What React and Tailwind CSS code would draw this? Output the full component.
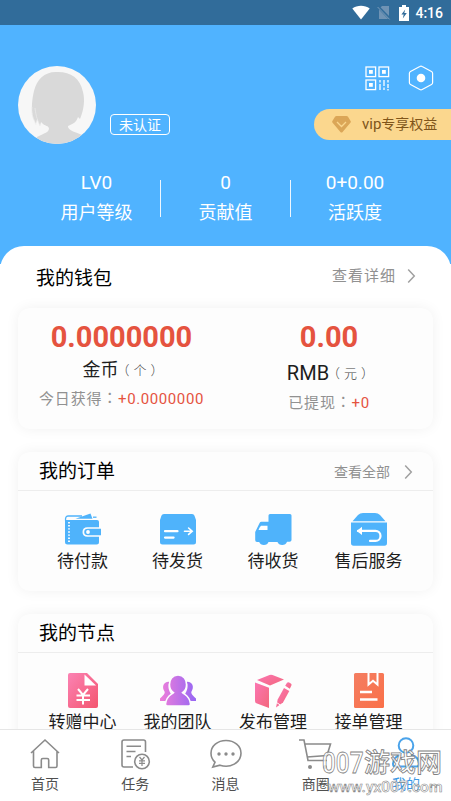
import React from "react";

function StatusBar() {
  return (
    <div className="flex h-[25px] items-center justify-end bg-[#316c9a] pr-[8px] text-white">
      <svg width="18" height="16" viewBox="0 0 18 16" fill="#fff">
        <path d="M0.3 3.6C5.2-.2 12.8-.2 17.7 3.6L9 14.6z" />
      </svg>
      <svg className="ml-[7px]" width="14" height="15" viewBox="0 0 14 15">
        <path d="M5 1h7v13H2V4z" fill="#6f93b4" />
        <path d="M0.6 1.2L13 14" stroke="#316c9a" strokeWidth="2.6" />
        <path d="M0.6 2L12.6 14.4" stroke="#7c9cba" strokeWidth="1" />
      </svg>
      <svg className="ml-[8px]" width="10" height="16" viewBox="0 0 10 16">
        <path d="M3 0h4v2h3v14H0V2h3z" fill="#fff" />
        <path d="M6.2 4.5L2.4 9.6h2.3l-.9 4 4-5.5H5.3z" fill="#316c9a" />
      </svg>
      <span className="ml-[6px] pt-px text-[14px] leading-[24px] font-medium">4:16</span>
    </div>
  );
}

function Avatar() {
  return (
    <svg width="78" height="78" viewBox="0 0 78 78">
      <defs>
        <clipPath id="avatar">
          <circle cx="39" cy="39" r="39" />
        </clipPath>
      </defs>
      <g clipPath="url(#avatar)">
        <rect width="78" height="78" fill="#f7f7f7" />
        <path
          d="M40 6C27 5 19 13 16 25C14 34 13 42 15 52L18 58L19 53L22 60L23 56C27 61 31 59 31 63C30 67 26 67 19 71V78H64V69C58 66 51 65 50 61C50 58 57 60 60 51L62 53C66 43 67 34 65 26C62 12 53 6 40 6Z"
          fill="#d9d9d9"
        />
        <path d="M14 41C13 49 16 53 18 59M17 42C18 51 20 55 22 60" stroke="#ececec" strokeWidth=".7" fill="none" />
      </g>
    </svg>
  );
}

function QrIcon() {
  return (
    <svg width="25" height="25" viewBox="0 0 25 25" fill="none" stroke="#fff" strokeWidth="1.3">
      <rect x="1" y="1" width="9.6" height="9.6" />
      <rect x="14" y="1" width="9.6" height="9.6" />
      <rect x="1" y="14" width="9.6" height="9.6" />
      <g fill="#fff" stroke="none">
        <rect x="4" y="4" width="3.8" height="3.8" />
        <rect x="17" y="4" width="3.8" height="3.8" />
        <rect x="4" y="17" width="3.8" height="3.8" />
      </g>
      <path d="M15 14v2.500m0 1.500v6M19 14v6m0 1.500v2.500M23 14v2.500m0 1.500v4m0 1v1.500" strokeWidth="1.3" />
    </svg>
  );
}

function HexIcon() {
  return (
    <svg width="26" height="26" viewBox="0 0 26 26">
      <path d="M11.800 1.500Q13 .8 14.200 1.500L23.500 6.500Q24.600 7.100 24.600 8.300V17.700Q24.600 18.900 23.500 19.500L14.200 24.500Q13 25.200 11.800 24.500L2.500 19.500Q1.400 18.900 1.400 17.700V8.300Q1.400 7.100 2.500 6.500Z" fill="none" stroke="#fff" strokeWidth="1.200" />
      <circle cx="13" cy="13" r="4.300" fill="#fff" />
    </svg>
  );
}

function Stat({ value, label, className }) {
  return (
    <div className={"flex flex-col items-center text-white " + className}>
      <span className="pt-px text-[19px] leading-[26px]">{value}</span>
      <span className="mt-[3px] text-[18px] leading-[28px]">{label}</span>
    </div>
  );
}

function Chevron() {
  return (
    <svg width="9" height="16" viewBox="0 0 9 16" fill="none" stroke="#a0a0a0" strokeWidth="1.500">
      <path d="M1.200 1.400L7.300 8L1.200 14.600" />
    </svg>
  );
}

function WalletIcon() {
  return (
    <svg width="38" height="34" viewBox="0 0 38 34">
      <path d="M1 7H33Q35 7 35 9V29q0 2.500-2.500 2.500H3.500Q1 31.500 1 29z" fill="#4fb3fb" />
      <path d="M1.600 8Q1 3 4 3H18" fill="none" stroke="#4fb3fb" strokeWidth="1.300" />
      <path d="M11.500 5.800L26.500 .5L28.500 5.800z" fill="#4fb3fb" />
      <path d="M29 4.200h3.500" stroke="#4fb3fb" strokeWidth="1.300" />
      <path d="M5 9v21" stroke="#fff" strokeWidth="1.800" strokeDasharray="1.400 1.700" />
      <path d="M38 14.200H23.500Q18.500 14.200 18.500 19T23.500 23.800H38z" fill="#fdfdfd" />
      <path d="M37 15.800H24Q20.200 15.800 20.200 19T24 22.200H37z" fill="#4fb3fb" />
      <circle cx="24" cy="19" r="1.900" fill="#fff" />
    </svg>
  );
}

function SendIcon() {
  return (
    <svg width="38" height="34" viewBox="0 0 38 34">
      <path d="M5 1h28q2 0 2.500 1.800L37 7v22q0 2.500-2.500 2.500h-31Q1 31.500 1 29V7l1.400-4.200Q3 1 5 1" fill="#4fb3fb" />
      <g fill="none" stroke="#fff" strokeWidth="2.200" strokeLinecap="round">
        <path d="M6 18.200h12.500M6 24.600h8.600" />
        <path d="M25.500 18.200h7.500M29.600 15l3.600 3.200-3.600 3.200" strokeWidth="1.600" />
      </g>
    </svg>
  );
}

function TruckIcon() {
  return (
    <svg width="38" height="34" viewBox="0 0 38 34">
      <path d="M16 1h20q1.500 0 1.500 1.500V27q0 1.800-2 1.800H33Q31.800 32 28.200 32T23.500 29H14.500Q13.500 32 9.900 32T5.200 29H3Q1.200 29 1.200 27V19L5.600 10Q6.200 8.800 7.500 8.800H14.500V2.500Q14.500 1 16 1" fill="#4fb3fb" />
      <path d="M7 12.800h6.500V17H4.500Q5.500 14 7 12.800" fill="#fff" />
    </svg>
  );
}

function ReturnIcon() {
  return (
    <svg width="38" height="34" viewBox="0 0 38 34">
      <path d="M13 0h12q3 0 5 2l5.500 6.200H2.500L8 2Q10 0 13 0" fill="#4fb3fb" />
      <path d="M1 9.600h36V30q0 2.800-2.500 2.800h-31Q1 32.800 1 30z" fill="#4fb3fb" />
      <path d="M8 17.900h17.500a5 5 0 0 1 0 10H20" fill="none" stroke="#fff" strokeWidth="2.200" strokeLinecap="round" />
      <path d="M12 13.800v8.200l-5.300-4.100z" fill="#fff" />
    </svg>
  );
}

function GiftDocIcon() {
  return (
    <svg width="32" height="37" viewBox="0 0 32 37">
      <defs>
        <linearGradient id="doc" x1="0" y1="0" x2="1" y2="1">
          <stop stopColor="#fb83b4" />
          <stop offset="1" stopColor="#f4556f" />
        </linearGradient>
      </defs>
      <path d="M3 1h17L31 12v22q0 2-2 2H3q-2 0-2-2V3q0-2 2-2" fill="url(#doc)" />
      <path d="M17.500 2.500V13.500H29z" fill="#fff" />
      <path d="M11 17l5 6 5-6M9.500 23.500h13.500M9.500 28h13.500M16 23v9.500" fill="none" stroke="#fff" strokeWidth="2" />
    </svg>
  );
}

function TeamIcon() {
  return (
    <svg width="38" height="34" viewBox="0 0 38 34">
      <defs>
        <linearGradient id="team" x1="0" y1="0" x2="38" y2="0" gradientUnits="userSpaceOnUse">
          <stop stopColor="#f17fd9" />
          <stop offset="1" stopColor="#9466f4" />
        </linearGradient>
      </defs>
      <g fill="url(#team)">
        <path d="M10.500 7.800C4.500 7.200 2.500 13 5.500 17.500C6.500 19.500 4 21.500 1 24.500V27H7L12 20C9.500 16 8.500 12 10.500 7.800" />
        <path d="M27.500 7.800C33.500 7.200 35.500 13 32.500 17.500C31.500 19.500 34 21.500 37 24.500V27H31L26 20C28.500 16 29.500 12 27.500 7.800" />
      </g>
      <path d="M19 1C13 1 10.500 6 10.500 10.500C10.500 14 12 17 14.500 18.600C12 21 7.500 21.500 6.500 30Q6.500 32 8.500 32H29.500Q31.500 32 31.500 30C30.500 21.500 26 21 23.500 18.600C26 17 27.500 14 27.500 10.500C27.500 6 25 1 19 1Z" fill="url(#team)" stroke="#fdfdfd" strokeWidth="1.500" />
    </svg>
  );
}

function PublishIcon() {
  return (
    <svg width="38" height="36" viewBox="0 0 38 36">
      <defs>
        <linearGradient id="pub" x1="0" y1="0" x2="1" y2="1">
          <stop stopColor="#fb76b2" />
          <stop offset="1" stopColor="#f3677c" />
        </linearGradient>
      </defs>
      <g fill="url(#pub)">
        <path d="M3 7L15.500 2Q17 1.500 18.500 2L30 6.500L16 12.500z" />
        <path d="M1 9.500L15 14.800V35L3 30.500Q1 30 1 28z" />
        <path d="M23.700 26.500L30 15L35.300 18L29 29.500L22 34.500z" />
        <path d="M31.200 12.800L33 9.800Q34 8.800 35.200 9.500L36.800 10.600Q38 11.300 37.400 12.600L35.800 15.800z" />
      </g>
      <path d="M22.500 29.500l4 2.600" stroke="#fff" strokeWidth="1" />
    </svg>
  );
}

function OrderDocIcon() {
  return (
    <svg width="32" height="37" viewBox="0 0 32 37">
      <defs>
        <linearGradient id="order" x1="0" y1="0" x2="1" y2="1">
          <stop stopColor="#f47e62" />
          <stop offset="1" stopColor="#fa7048" />
        </linearGradient>
      </defs>
      <rect x="1" y="1" width="30" height="35" rx="1.500" fill="url(#order)" />
      <path d="M15.500 1v11.500l4.500-3.800 4.500 3.800V1" fill="none" stroke="#fff" strokeWidth="2" />
      <path d="M7 20h12M7 27.500h17.500" stroke="#fff" strokeWidth="2.300" />
    </svg>
  );
}

function Card({ title, more, children, className }) {
  return (
    <section className={"mx-[18px] rounded-[12px] bg-[#fdfdfd] shadow-[0_0_14px_rgba(0,0,0,0.06)] " + className}>
      <div className="flex h-[39px] items-center justify-between border-b border-[#ededed] pr-5 pl-[21px]">
        <h2 className="pt-px text-[19px] leading-[28px] text-black">{title}</h2>
        {more && (
          <div className="flex items-center gap-[14px] pt-px text-[14px] leading-5 text-[#919191]">
            {more}
            <Chevron />
          </div>
        )}
      </div>
      <div className="grid grid-cols-[95px_95px_96px_95px] pl-[17px]">{children}</div>
    </section>
  );
}

function Entry({ icon, label }) {
  return (
    <div className="flex flex-col items-center">
      <div className="flex h-[37px] items-center">{icon}</div>
      <span className="mt-px text-[17px] leading-[24px] whitespace-nowrap text-[#1d1d1d]">{label}</span>
    </div>
  );
}

const stroke = { fill: "none", stroke: "#8b8b8b", strokeWidth: 1.6 };

function HomeIcon() {
  return (
    <svg width="32" height="32" viewBox="0 0 32 32" {...stroke}>
      <path d="M2 15L16 2L30 15M4.500 13V28Q4.500 29.500 6 29.500H12.300V22Q12.300 20.500 13.800 20.500H18.200Q19.700 20.500 19.700 22V29.500H26.500Q28 29.500 28 28V13" />
    </svg>
  );
}

function TaskIcon() {
  return (
    <svg width="32" height="32" viewBox="0 0 32 32" {...stroke}>
      <path d="M26.500 14V4Q26.500 2 24.500 2H5Q3 2 3 4V27Q3 29 5 29H14M7.500 8.300H22M7.500 13.500H16.500M7.500 18.500H12" />
      <circle cx="23" cy="23.500" r="7.300" />
      <path d="M20.500 19l2.500 3 2.500-3M20 22.800h6M20 25.300h6M23 22v6" strokeWidth="1.200" />
    </svg>
  );
}

function ChatIcon() {
  return (
    <svg width="34" height="32" viewBox="0 0 34 32" {...stroke}>
      <path d="M17 2.500C8.500 2.500 2 8 2 15.300C2 19 3.500 22 6 24.200L3.800 29L11 27.200C21 30.500 32 25 32 15.300C32 8 25.500 2.500 17 2.500Z" />
      <g fill="#8b8b8b" stroke="none">
        <circle cx="10" cy="16" r="1.700" />
        <circle cx="17" cy="16" r="1.700" />
        <circle cx="24" cy="16" r="1.700" />
      </g>
    </svg>
  );
}

function CartIcon() {
  return (
    <svg width="34" height="32" viewBox="0 0 34 32" {...stroke}>
      <path d="M0 2H5L9 22.500H28M6.500 6H31.500L28 17.500L8 19" />
      <g fill="#8b8b8b" stroke="none">
        <circle cx="11" cy="29" r="2" />
        <circle cx="26" cy="29" r="2" />
      </g>
    </svg>
  );
}

function MeIcon() {
  return (
    <svg width="32" height="34" viewBox="0 0 32 34" fill="none" stroke="#4aa3ea" strokeWidth="2">
      <circle cx="16" cy="8.500" r="7.300" />
      <path d="M11 17.500C5 19.500 3 23 3 27Q3 29.500 5.500 29.500H26.500Q29 29.500 29 27C29 23 27 19.500 21 17.500" />
    </svg>
  );
}

function Tab({ icon, label, active }) {
  return (
    <div className="flex flex-1 flex-col items-center">
      <div className="flex h-[32px] items-center">{icon}</div>
      <span className={"mt-[4px] text-[14px] leading-5 " + (active ? "text-[#3c98e4]" : "text-[#4f4f4f]")}>{label}</span>
    </div>
  );
}

function Unit({ children }) {
  return <span className="-mr-[7px] -ml-[2px] pt-px text-[13px] font-light tracking-[4px] text-[#444]">{children}</span>;
}

function Colon() {
  return <span className="pb-[5px] leading-none font-['Noto_Sans_CJK_TC',sans-serif]">：</span>;
}

export default function App() {
  return (
    <div className="relative flex h-[801px] w-[451px] flex-col overflow-hidden bg-white font-['Roboto','Noto_Sans_CJK_SC',sans-serif]">
      <StatusBar />
      <header className="h-[239px] shrink-0 bg-[#50b3ff]">
        <div className="flex h-[119px]">
          <div className="pt-[41px] pl-[18px]">
            <Avatar />
          </div>
          <div className="mt-[89px] ml-[14px] flex h-[21px] w-[60px] items-center justify-center rounded-[4px] border border-white pt-px text-[14px] leading-[18px] text-white">
            未认证
          </div>
          <div className="ml-auto flex flex-col items-end pt-[40px]">
            <div className="flex items-center gap-[18px] pr-[17px]">
              <QrIcon />
              <HexIcon />
            </div>
            <div className="mt-[18px] flex h-[31px] w-[137px] items-center rounded-l-full bg-[#fbd78e] pl-[18px] text-[14px] text-[#80551a]">
              <svg width="19" height="17" viewBox="0 0 19 17">
                <path d="M4.500 0h10q1 0 1.500.8l2.600 4.200q.6 1-.2 1.800L10.600 16q-1.100 1-2.200 0L.6 6.800Q-.2 6 .4 5L3 .8Q3.500 0 4.500 0" fill="#dba657" />
                <path d="M5 6l4.500 4.500L14 6" fill="none" stroke="#fbd78e" strokeWidth="1.300" />
              </svg>
              <span className="ml-[11px] whitespace-nowrap"><span className="text-[15px]">vip</span>专享权益</span>
            </div>
          </div>
        </div>
        <div className="mt-[25px] flex h-[57px]">
          <Stat value="LV0" label="用户等级" className="ml-8 w-[129px]" />
          <div className="-ml-px mt-[11px] h-[37px] w-px bg-white/90" />
          <Stat value="0" label="贡献值" className="w-[129px]" />
          <div className="mt-[11px] h-[37px] w-px bg-white/90" />
          <Stat value="0+0.00" label="活跃度" className="w-[128px]" />
        </div>
      </header>
      <main className="relative -mt-[18px] min-h-0 flex-1 overflow-hidden rounded-t-[24px] bg-white">
        <div className="flex h-[62px] items-center justify-between pr-[35px] pl-9">
          <h2 className="pt-[3px] text-[19px] leading-[28px] text-black">我的钱包</h2>
          <div className="flex items-center gap-[11px] pb-[2px] text-[15px] leading-5 tracking-[1px] text-[#919191]">
            查看详细
            <Chevron />
          </div>
        </div>
        <section className="mx-[18px] flex h-[121px] rounded-[12px] bg-[#fdfdfd] shadow-[0_0_14px_rgba(0,0,0,0.06)]">
          <div className="flex w-[207px] flex-col items-center">
            <span className="mt-[12px] text-[29px] leading-[34px] font-bold text-[#e5533f]">0.0000000</span>
            <span className="mt-[3px] flex h-[26px] text-[18px] leading-[26px] whitespace-nowrap text-[#1d1d1d]">
              金币<Unit>（个）</Unit>
            </span>
            <span className="mt-[5px] flex h-[22px] items-center text-[15px] leading-[22px] tracking-[0.8px] whitespace-nowrap text-[#919191]">
              今日获得<Colon /><span className="tracking-[0.6px] text-[#e5533f]">+0.0000000</span>
            </span>
          </div>
          <div className="flex w-[208px] flex-col items-center">
            <span className="mt-[12px] text-[29px] leading-[34px] font-bold text-[#e5533f]">0.00</span>
            <span className="mt-[5px] flex h-[26px] text-[20px] leading-[28px] whitespace-nowrap text-[#1d1d1d]">
              RMB<Unit>（元）</Unit>
            </span>
            <span className="mt-[7px] flex h-[22px] items-center text-[15px] leading-[22px] tracking-[0.8px] text-[#919191]">
              已提现<Colon /><span className="tracking-[0.6px] text-[#e5533f]">+0</span>
            </span>
          </div>
        </section>
        <Card title="我的订单" more="查看全部" className="mt-[23px] h-[139px]">
          <div className="col-span-4 h-[20px]" />
          <Entry icon={<WalletIcon />} label="待付款" />
          <Entry icon={<SendIcon />} label="待发货" />
          <Entry icon={<TruckIcon />} label="待收货" />
          <Entry icon={<ReturnIcon />} label="售后服务" />
        </Card>
        <Card title="我的节点" className="mt-[23px] h-[150px]">
          <div className="col-span-4 h-[19px]" />
          <Entry icon={<GiftDocIcon />} label="转赠中心" />
          <Entry icon={<TeamIcon />} label="我的团队" />
          <Entry icon={<PublishIcon />} label="发布管理" />
          <Entry icon={<OrderDocIcon />} label="接单管理" />
        </Card>
      </main>
      <nav className="relative flex h-[72px] shrink-0 border-t border-[#e6e6e6] bg-white pt-[8px]">
        <Tab icon={<HomeIcon />} label="首页" />
        <Tab icon={<TaskIcon />} label="任务" />
        <Tab icon={<ChatIcon />} label="消息" />
        <Tab icon={<CartIcon />} label="商圈" />
        <Tab icon={<MeIcon />} label="我的" active />
      </nav>
      <div className="absolute top-[748px] left-[322px] w-[126px] whitespace-nowrap text-white/75">
        <div className="flex h-[30px] items-center text-[26px] leading-[30px] font-medium [-webkit-text-stroke:0.8px_#808080]">
          <span className="w-[42px] origin-left scale-x-[0.84] text-[29px]">007</span>
          <span>游戏网</span>
        </div>
        <div className="pl-[6px] text-[15.5px] leading-[19px] font-medium [-webkit-text-stroke:0.6px_#8c8c8c]">www.yx007.com</div>
      </div>
    </div>
  );
}
